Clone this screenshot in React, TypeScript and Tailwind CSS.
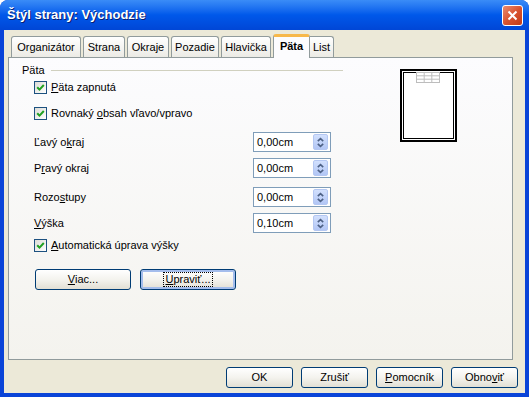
import React from "react";

const ui = "font-['Liberation_Sans',Arial,sans-serif] text-[11px] text-black";

function Check() {
  return (
    <span className="w-[13px] h-[13px] shrink-0 border border-[#1C5180] bg-linear-to-br from-[#DCDCD7] to-white flex items-center justify-center">
      <svg width="9" height="9" viewBox="0 0 9 9">
        <path d="M1.2 4.2 L3.5 6.6 L7.8 2" stroke="#21A121" strokeWidth="2" fill="none" />
      </svg>
    </span>
  );
}

function CheckRow({ pre, mn, post, className }: { pre: string; mn: string; post: string; className: string }) {
  return (
    <div className={`h-[13px] flex items-center pl-[25px] ${className}`}>
      <Check />
      <span className="ml-[4px] leading-none">
        {pre}
        <span className="underline">{mn}</span>
        {post}
      </span>
    </div>
  );
}

function Spin({ pre, mn, post, value, className }: { pre: string; mn: string; post: string; value: string; className: string }) {
  return (
    <div className={`h-[20px] flex items-center pl-[25px] ${className}`}>
      <span className="w-[219px]">
        {pre}
        <span className="underline">{mn}</span>
        {post}
      </span>
      <div className="w-[78px] h-[20px] border border-[#7F9DB9] bg-white flex items-center pl-[3px] pr-[2px]">
        <span className="flex-1">{value}</span>
        <span className="w-[15px] h-[16px] rounded-[2px] border border-[#B4C7F2] bg-linear-to-b from-[#D2E0FD] to-[#B2C6F5] flex items-center justify-center">
          <svg width="9" height="11" viewBox="0 0 9 11">
            <path d="M1.8 4.2 L4.5 1.6 L7.2 4.2" stroke="#4D6185" strokeWidth="1.6" fill="none" />
            <path d="M1.8 6.8 L4.5 9.4 L7.2 6.8" stroke="#4D6185" strokeWidth="1.6" fill="none" />
          </svg>
        </span>
      </div>
    </div>
  );
}

function XpButton({ children, w, focused }: { children: React.ReactNode; w: string; focused?: boolean }) {
  return (
    <div
      className={`${w} h-[21px] border border-[#003C74] rounded-[3px] bg-linear-to-b from-white via-[#F4F3EE] to-[#E2DFD4] flex items-center justify-center ${
        focused ? "shadow-[inset_0_0_0_2px_#A4BDEC]" : ""
      }`}
    >
      {children}
    </div>
  );
}

function Preview() {
  return (
    <svg width="57" height="73" viewBox="0 0 57 73">
      <rect x="0" y="0" width="57" height="73" fill="white" />
      <rect x="1" y="1" width="55" height="71" stroke="black" strokeWidth="2" fill="none" />
      <rect x="3.5" y="3.5" width="50" height="66" stroke="black" strokeWidth="1" fill="none" />
      <rect x="16" y="2.5" width="24" height="11" fill="white" />
      <g stroke="#BDBDBD" strokeWidth="1" fill="none">
        <rect x="16.5" y="3.5" width="23" height="10" />
        <line x1="16.5" y1="6.8" x2="39.5" y2="6.8" />
        <line x1="16.5" y1="10.2" x2="39.5" y2="10.2" />
        <line x1="24.2" y1="3.5" x2="24.2" y2="13.5" />
        <line x1="31.8" y1="3.5" x2="31.8" y2="13.5" />
      </g>
    </svg>
  );
}

const tabs = [
  { label: "Organizátor", cls: "ml-[7px] w-[70px]" },
  { label: "Strana", cls: "ml-[2px] w-[42px]" },
  { label: "Okraje", cls: "ml-[2px] w-[42px]" },
  { label: "Pozadie", cls: "ml-[2px] w-[48px]" },
  { label: "Hlavička", cls: "ml-[2px] w-[50px]" },
];

export default function App() {
  return (
    <div className={`w-[529px] h-[397px] flex flex-col bg-[#0A44D8] rounded-t-[8px] overflow-hidden ${ui}`}>
      {/* title bar */}
      <div className="h-[30px] shrink-0 flex items-center pl-[7px] pr-[6px] bg-linear-to-b from-[#3A8CF7] via-[#0058EA] to-[#0046D6]">
        <span className="flex-1 text-[13px] font-bold text-white [text-shadow:1px_1px_0_#0A1E6E]">Štýl strany: Východzie</span>
        <div className="w-[21px] h-[21px] rounded-[3px] border border-white bg-linear-to-br from-[#E88A6F] via-[#D9532F] to-[#C23A14] flex items-center justify-center">
          <svg width="11" height="11" viewBox="0 0 11 11">
            <path d="M1.5 1.5 L9.5 9.5 M9.5 1.5 L1.5 9.5" stroke="white" strokeWidth="2" />
          </svg>
        </div>
      </div>

      {/* client */}
      <div className="flex-1 mx-[4px] mb-[4px] bg-[#ECE9D8] flex flex-col">
        <div className="h-[27px] pt-[4px] flex items-end">
          {tabs.map((t) => (
            <div
              key={t.label}
              className={`${t.cls} h-[21px] border border-b-0 border-[#919B9C] rounded-t-[3px] bg-linear-to-b from-white to-[#ECEBE5] flex items-center justify-center`}
            >
              {t.label}
            </div>
          ))}
          <div className="ml-[2px] w-[37px] h-[24px] -mb-px relative z-10 border-x border-[#919B9C] border-t-[3px] border-t-[#F7B84A] rounded-t-[3px] bg-[#FCFCFE] flex items-center justify-center font-bold pb-[2px]">
            Päta
          </div>
          <div className="w-[24px] h-[21px] border border-b-0 border-l-0 border-[#919B9C] rounded-tr-[3px] bg-linear-to-b from-white to-[#ECEBE5] flex items-center justify-center">
            List
          </div>
        </div>

        {/* tab panel */}
        <div className="ml-[4px] w-[505px] h-[303px] border border-[#919B9C] bg-linear-to-b from-[#FCFCFE] to-[#F4F3EE] flex">
          <div className="w-[334px] flex flex-col">
            <div className="mt-[5px] h-[14px] flex items-center pl-[13px]">
              <span>Päta</span>
              <div className="flex-1 ml-[6px] h-px bg-[#D0D0BF]" />
            </div>
            <CheckRow className="mt-[4px]" pre="" mn="P" post="äta zapnutá" />
            <CheckRow className="mt-[13px]" pre="Rovnaký " mn="o" post="bsah vľavo/vpravo" />
            <Spin className="mt-[12px]" pre="Ľavý o" mn="k" post="raj" value="0,00cm" />
            <Spin className="mt-[6px]" pre="P" mn="r" post="avý okraj" value="0,00cm" />
            <Spin className="mt-[9px]" pre="Rozo" mn="s" post="tupy" value="0,00cm" />
            <Spin className="mt-[6px]" pre="" mn="V" post="ýška" value="0,10cm" />
            <CheckRow className="mt-[6px]" pre="" mn="A" post="utomatická úprava výšky" />
            <div className="mt-[17px] pl-[26px] flex gap-[9px]">
              <XpButton w="w-[96px]">
                <span>
                  <span className="underline">V</span>iac...
                </span>
              </XpButton>
              <XpButton w="w-[96px]" focused>
                <span className="border border-dotted border-black px-[1px] leading-[13px]">
                  <span className="underline">U</span>praviť...
                </span>
              </XpButton>
            </div>
          </div>
          <div className="ml-[57px] mt-[11px]">
            <Preview />
          </div>
        </div>

        {/* bottom buttons */}
        <div className="mt-[7px] flex justify-end gap-[8px] pr-[7px]">
          <XpButton w="w-[67px]">OK</XpButton>
          <XpButton w="w-[67px]">Zrušiť</XpButton>
          <XpButton w="w-[67px]">
            <span>
              <span className="underline">P</span>omocník
            </span>
          </XpButton>
          <XpButton w="w-[67px]">
            <span>
              Obno<span className="underline">v</span>iť
            </span>
          </XpButton>
        </div>
      </div>
    </div>
  );
}
